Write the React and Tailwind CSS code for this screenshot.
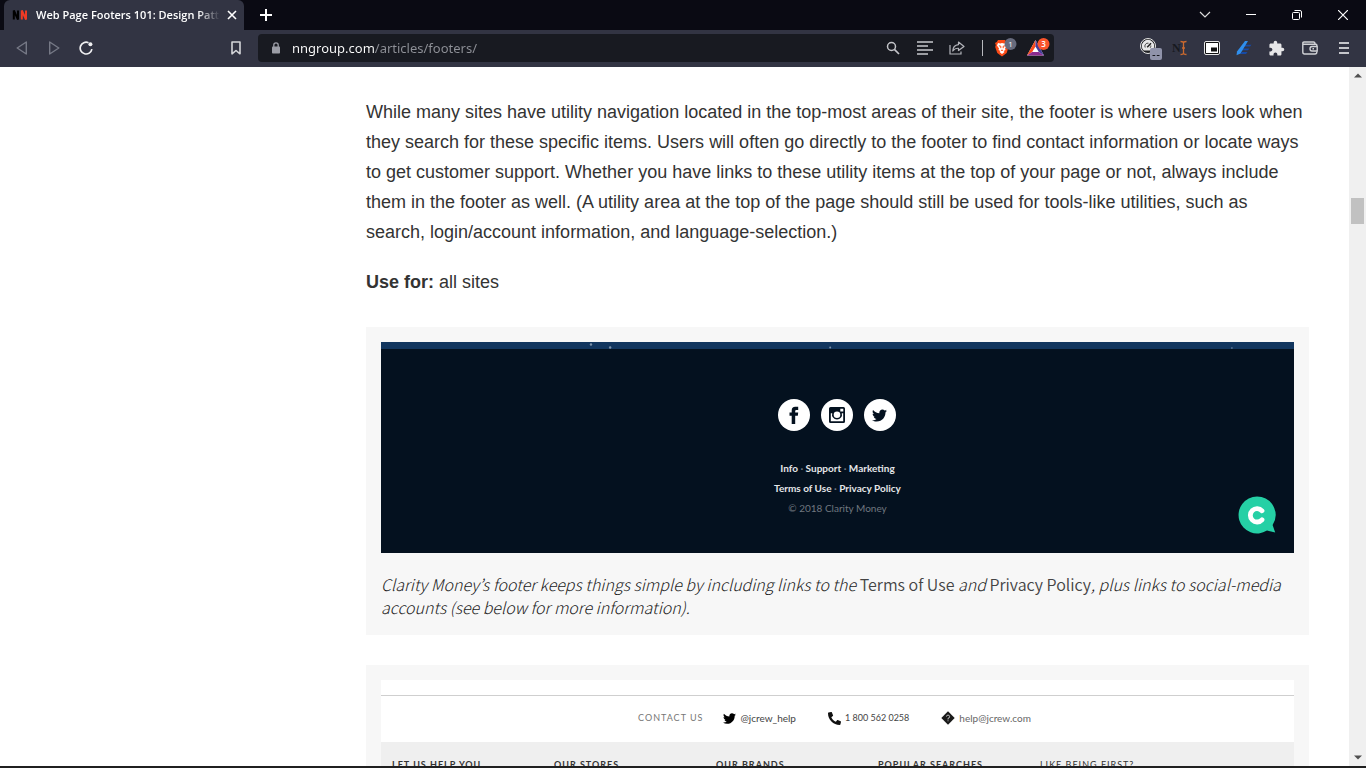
import React from "react";
import { FaTwitter, FaPhone } from "react-icons/fa";
import { MdExtension } from "react-icons/md";

function IconButton({ label, children, className = "" }) {
  return (
    <button type="button" aria-label={label} className={`flex h-7 w-8 shrink-0 items-center justify-center ${className}`}>
      {children}
    </button>
  );
}

function TabStrip() {
  return (
    <div className="flex h-[30px] shrink-0 items-stretch bg-[#0a0a13] pl-1 text-white">
      <div className="flex w-60 items-center rounded-t-md bg-[#323443] pl-2">
        <svg width="16" height="16" viewBox="0 0 16 16" className="shrink-0" aria-hidden="true">
          <path d="M1.8 12.5V3.5L6 12.5V3.5" fill="none" stroke="#000" strokeWidth="2" />
          <path d="M9.8 12.5V3.5L14 12.5V3.5" fill="none" stroke="#f03a24" strokeWidth="2" />
        </svg>
        <span className="ml-2 w-[184px] shrink-0 overflow-hidden font-['Open_Sans',sans-serif] text-[11px] font-semibold whitespace-nowrap [mask-image:linear-gradient(90deg,#000_162px,transparent_184px)]">
          Web Page Footers 101: Design Patterns
        </span>
        <button type="button" aria-label="Close tab" className="flex h-6 w-6 shrink-0 items-center justify-center">
          <svg width="10" height="10" viewBox="0 0 10 10" stroke="#fff" strokeWidth="1.6">
            <path d="M1 1L9 9M9 1L1 9" />
          </svg>
        </button>
      </div>
      <button type="button" aria-label="New tab" className="ml-1.5 flex w-8 items-center justify-center">
        <svg width="12" height="12" viewBox="0 0 12 12" stroke="#fff" strokeWidth="2">
          <path d="M6 0V12M0 6H12" />
        </svg>
      </button>
      <div className="ml-auto flex">
        <button type="button" aria-label="Search tabs" className="flex w-[46px] items-center justify-center">
          <svg width="12" height="12" viewBox="0 0 12 12" fill="none" stroke="#ddd" strokeWidth="1.2">
            <path d="M1 3L6 8L11 3" />
          </svg>
        </button>
        <button type="button" aria-label="Minimize" className="flex w-[46px] items-center justify-center">
          <svg width="10" height="10" viewBox="0 0 10 10" fill="#fff">
            <path d="M0 4H10V5H0Z" />
          </svg>
        </button>
        <button type="button" aria-label="Restore" className="flex w-[46px] items-center justify-center">
          <svg width="10" height="10" viewBox="0 0 10 10" fill="none" stroke="#fff">
            <rect x="0.5" y="2.5" width="7" height="7" rx="1" />
            <path d="M2.5 0.5H8Q9.5 0.5 9.5 2V7.5" />
          </svg>
        </button>
        <button type="button" aria-label="Close window" className="flex w-[46px] items-center justify-center">
          <svg width="10" height="10" viewBox="0 0 10 10" stroke="#fff" strokeWidth="1.2">
            <path d="M0 0L10 10M10 0L0 10" />
          </svg>
        </button>
      </div>
    </div>
  );
}

function AddressBar() {
  return (
    <form className="mr-[78px] ml-1.5 flex h-7 min-w-0 flex-1 items-center rounded bg-[#181a21]" onSubmit={(e) => e.preventDefault()}>
      <svg width="8" height="12" viewBox="0 0 8 12" className="mr-3 ml-3.5 shrink-0" aria-hidden="true">
        <path d="M1.8 5V3A2.2 2.2 0 0 1 6.2 3V5" fill="none" stroke="#9b9da6" strokeWidth="1.3" />
        <rect y="4.5" width="8" height="7" rx="0.8" fill="#9b9da6" />
      </svg>
      <input
        aria-label="Address"
        defaultValue="nngroup.com/articles/footers/"
        className="h-7 min-w-0 flex-1 bg-[linear-gradient(90deg,#ffffff_83px,#8f9198_83px)] bg-clip-text font-['Noto_Sans',sans-serif] text-[13px] text-transparent outline-none"
      />
      <IconButton label="Zoom">
        <svg width="14" height="14" viewBox="0 0 14 14" fill="none" stroke="#c3c4c9">
          <circle cx="5.5" cy="5.5" r="4" strokeWidth="1.5" />
          <path d="M8.4 8.4L13 13" strokeWidth="1.7" />
        </svg>
      </IconButton>
      <IconButton label="Reader view">
        <svg width="16" height="14" viewBox="0 0 16 14" fill="#9b9da2">
          <path d="M0 0H16V2H0ZM0 4H11V6H0ZM0 8H16V10H0ZM0 12H11V14H0Z" />
        </svg>
      </IconButton>
      <IconButton label="Share">
        <svg width="16" height="14" viewBox="0 0 16 14" fill="none" stroke="#b4b5bb" strokeWidth="1.2">
          <path d="M1 4V13H12V10.5" />
          <path d="M9.5 1L15 5.5L9.5 9.5V7.3Q6 7 3.8 10Q4 4.2 9.5 3.6Z" strokeLinejoin="round" />
        </svg>
      </IconButton>
      <span className="mr-1.5 ml-[9px] h-4 w-px bg-[#b8b9be]" />
      <IconButton label="Brave Shields">
        <svg width="24" height="20" viewBox="0 0 24 20">
          <path d="M5 2H12L14 4.5L15.5 5L15 7L15.5 9L13.7 15L9 18.5L4.3 15L2.2 9L2.8 7L2 5L3.8 4Z" fill="#fb4a16" />
          <path d="M5 5L7.3 5.5L9 5L11 5.5L13 5L14 7.5L12 10.5L12.5 12L10.5 13L11.5 14L9 16L6.6 14L7.5 13L5.5 12L6 10.5L4 7.5Z" fill="#fff" />
          <path d="M5.8 7.8L7.8 8.2V10.2M12.2 7.8L10.2 8.2V10.2M8 12L9 12.6L10 12" fill="none" stroke="#fb4a16" strokeWidth="1" />
          <circle cx="17.5" cy="6" r="6" fill="#676b7d" />
          <text x="17.5" y="9" textAnchor="middle" fill="#fff" fontSize="8" fontFamily="Open Sans">1</text>
        </svg>
      </IconButton>
      <IconButton label="Brave Rewards" className="ml-px">
        <svg width="24" height="20" viewBox="0 0 24 20">
          <path d="M9.5 2L1 17.5H18Z" fill="#fff" />
          <path d="M9.5 2L1 17.5L6.2 14L9.5 8.5Z" fill="#fa4b1b" />
          <path d="M1 17.5H18L12.8 14H6.2Z" fill="#8b2a8f" />
          <path d="M9.5 2L18 17.5L12.8 14L9.5 8.5Z" fill="#463b99" />
          <circle cx="17.5" cy="6" r="6" fill="#fb542b" />
          <text x="17.5" y="9" textAnchor="middle" fill="#fff" fontSize="8" fontWeight="600" fontFamily="Open Sans">3</text>
        </svg>
      </IconButton>
    </form>
  );
}

function Toolbar() {
  return (
    <div className="flex h-[37px] shrink-0 items-center bg-[#323443] px-1.5 pb-px">
      <IconButton label="Back">
        <svg width="12" height="14" viewBox="0 0 12 14" fill="none" stroke="#767986" strokeWidth="1.4" strokeLinejoin="round">
          <path d="M10.3 1V13L1.2 7Z" />
        </svg>
      </IconButton>
      <IconButton label="Forward">
        <svg width="12" height="14" viewBox="0 0 12 14" fill="none" stroke="#767986" strokeWidth="1.4" strokeLinejoin="round">
          <path d="M1.7 1V13L10.8 7Z" />
        </svg>
      </IconButton>
      <IconButton label="Reload">
        <svg width="14" height="14" viewBox="0 0 14 14" fill="none" stroke="#f0f0f2" strokeWidth="1.7">
          <path d="M9.5 1.7A5.9 5.9 0 1 0 12.9 8.2" />
          <circle cx="11.4" cy="3.2" r="2" fill="#f0f0f2" stroke="none" />
        </svg>
      </IconButton>
      <IconButton label="Bookmark this page" className="ml-[118px]">
        <svg width="10" height="14" viewBox="0 0 10 14" fill="none" stroke="#d4d5d9" strokeWidth="1.6">
          <path d="M1 1H9V12.8L5 9.5L1 12.8Z" strokeLinejoin="round" />
        </svg>
      </IconButton>
      <AddressBar />
      <IconButton label="Page speed">
        <svg width="24" height="24" viewBox="0 0 24 24" className="ml-1">
          <circle cx="10" cy="10" r="7.5" fill="#202124" stroke="#e6e6e6" strokeWidth="1" />
          <path d="M5.8 14.6A6.2 6.2 0 1 1 14.2 14.6Z" fill="#e8e8e8" />
          <path d="M7.2 11.5A3 3 0 0 1 10.5 7.2M12.8 9.5A3 3 0 0 1 12.2 11.8" fill="none" stroke="#333" strokeWidth="0.9" />
          <path d="M9.2 11.3L13 7.2" stroke="#222" strokeWidth="1.5" />
          <rect x="12" y="12" width="12" height="12" rx="2" fill="#9093aa" />
          <path d="M14.5 19.5H17.2M18.8 19.5H21.5" stroke="#16181f" strokeWidth="1.2" />
        </svg>
      </IconButton>
      <IconButton label="Text tool">
        <svg width="16" height="16" viewBox="0 0 16 16">
          <text x="0" y="12" fill="#17191f" fontSize="12" fontWeight="700" fontFamily="Liberation Serif">N</text>
          <path d="M8.5 1.5Q11.5 1.5 11.5 3V13Q11.5 14.5 8.5 14.5M14.5 1.5Q11.5 1.5 11.5 3M11.5 13Q11.5 14.5 14.5 14.5M10 8H13" fill="none" stroke="#cc6a2f" strokeWidth="1.3" />
        </svg>
      </IconButton>
      <IconButton label="Picture in picture">
        <svg width="16" height="14" viewBox="0 0 16 14">
          <rect x="0.5" y="0.5" width="15" height="13" rx="1.5" fill="#111" stroke="#e6e6e6" />
          <rect x="2" y="2" width="12" height="10" fill="#fff" />
          <rect x="7" y="6.5" width="6" height="4" fill="#111" />
        </svg>
      </IconButton>
      <IconButton label="Highlighter">
        <svg width="16" height="16" viewBox="0 0 16 16">
          <path d="M8.5 4.8H15.5L14 6.6H7ZM7.5 8.5H13.5L12 10.3H6ZM6 12H11.5L10 14H4Z" fill="#174aa5" />
          <path d="M9 1H12L4.5 13.5L0.5 15.2L1 11.5Z" fill="#2f8fee" />
        </svg>
      </IconButton>
      <IconButton label="Extensions">
        <MdExtension size={17} color="#e6e6e8" />
      </IconButton>
      <IconButton label="Wallet" className="ml-0.5">
        <svg width="16" height="14" viewBox="0 0 16 14" fill="none" stroke="#d0d1d5" strokeWidth="1.4">
          <path d="M14.8 5V4Q14.8 3.2 14 3.2H2Q0.8 3.2 0.8 2.2Q0.8 1 2 1H11.5Q13 1 13 3M0.8 2V11Q0.8 13 2.5 13H13Q14.8 13 14.8 11V10.5" />
          <path d="M15.2 5.5H10Q8 5.5 8 7.7Q8 10 10 10H15.2Z" />
          <path d="M10.5 7.8H12" />
        </svg>
      </IconButton>
      <IconButton label="Menu" className="ml-0.5">
        <svg width="10" height="12" viewBox="0 0 10 12" fill="#c5c6cb">
          <path d="M0 0H10V2H0ZM0 5H10V7H0ZM0 10H10V12H0Z" />
        </svg>
      </IconButton>
    </div>
  );
}

function SocialLink({ label, children }) {
  return (
    <a href="#social" aria-label={label} className="flex size-8 items-center justify-center rounded-full bg-white text-[#04111f]">
      {children}
    </a>
  );
}

function ClarityFooter() {
  return (
    <div className="relative h-[211px] bg-[#04111f] font-['Lato',sans-serif] text-[10px] font-bold text-[#e4e6e8]">
      <svg className="block h-[7px] w-full bg-[#12365f]" aria-hidden="true">
        <g fill="#7d93ab">
          <circle cx="23%" cy="2.5" r="1.2" />
          <circle cx="25.1%" cy="5.5" r="1.2" />
          <circle cx="49.2%" cy="5.5" r="1" />
          <circle cx="93.2%" cy="6" r="0.8" />
        </g>
      </svg>
      <div className="flex justify-center gap-[11px] pt-[50px] pr-0.5">
        <SocialLink label="Facebook">
          <svg width="10" height="18" viewBox="0 0 10 18" fill="currentColor">
            <path d="M2.7 18V9.8H0.5V6.6H2.7V4.4Q2.7 0.8 6.2 0.8H9.2V4H7.2Q6.2 4 6.2 5V6.6H9.2L8.8 9.8H6.2V18Z" />
          </svg>
        </SocialLink>
        <SocialLink label="Instagram">
          <svg width="16" height="16" viewBox="0 0 16 16" fill="currentColor">
            <path fillRule="evenodd" d="M1.5 0H14.5Q16 0 16 1.5V14.5Q16 16 14.5 16H1.5Q0 16 0 14.5V1.5Q0 0 1.5 0ZM11.3 1.7V4.6H14.3V1.7ZM1.8 6.2V14.2H14.2V6.2H12.8A5 5 0 1 1 3.2 6.2ZM8 4.4A3.3 3.3 0 1 0 8 11A3.3 3.3 0 1 0 8 4.4Z" />
          </svg>
        </SocialLink>
        <SocialLink label="Twitter">
          <FaTwitter size={15} />
        </SocialLink>
      </div>
      <div className="flex flex-col items-center pt-[27px] text-center leading-5">
        <p><a href="#info">Info</a> <span className="text-[#6d7680]">·</span> <a href="#support">Support</a> <span className="text-[#6d7680]">·</span> <a href="#marketing">Marketing</a></p>
        <p><a href="#terms">Terms of Use</a> <span className="text-[#6d7680]">·</span> <a href="#privacy">Privacy Policy</a></p>
        <p className="font-normal text-[#70777f]">© 2018 Clarity Money</p>
      </div>
      <button type="button" aria-label="Open chat" className="absolute right-[18px] bottom-[19px]">
        <svg width="38" height="38" viewBox="0 0 38 38" className="block">
          <path d="M19 0.5A18.5 18.5 0 1 0 29 34.6L37.2 36.5L34.6 29A18.5 18.5 0 0 0 19 0.5Z" fill="#25d0a5" />
          <path d="M24 14.8A6.7 6.7 0 1 0 24 23.8" fill="none" stroke="#fff" strokeWidth="4.8" strokeLinecap="round" />
        </svg>
      </button>
    </div>
  );
}

const columns = ["LET US HELP YOU", "OUR STORES", "OUR BRANDS", "POPULAR SEARCHES", "LIKE BEING FIRST?"];

function JCrewFooter() {
  return (
    <div className="bg-white font-['Lato',sans-serif] text-[10px] text-[#444]">
      <div className="h-4 border-b border-[#cfcfcf]" />
      <div className="flex h-[46px] items-center justify-center gap-8 pr-1.5 pb-0.5">
        <div className="flex items-center gap-5">
          <span className="text-[9px] tracking-[1px] text-[#777]">CONTACT US</span>
          <a href="#twitter" className="flex items-center gap-1">
            <FaTwitter size={13} color="#000" />@jcrew_help
          </a>
        </div>
        <a href="#call" className="flex items-center gap-1 text-[9px]">
          <FaPhone size={13} color="#111" className="-scale-x-100" />1 800 562 0258
        </a>
        <a href="#email" className="flex items-center gap-1 text-[#666]">
          <svg width="14" height="14" viewBox="0 0 14 14" aria-hidden="true">
            <path d="M7 0.3L13.7 7L7 13.7L0.3 7Z" fill="#1a1a1a" />
            <path d="M5.4 5.6A1.6 1.6 0 1 1 7 7.3V8.5M7 9.3V10.3" fill="none" stroke="#ccc" strokeWidth="0.9" />
          </svg>
          help@jcrew.com
        </a>
      </div>
      <div className="grid h-40 grid-cols-[repeat(4,162px)_1fr] bg-[#efefef] pt-[17px] pl-[11px] text-[9px] leading-3 font-bold tracking-[1px] text-[#333]">
        {columns.map((c) => (
          <h3 key={c} className="last:font-normal">{c}</h3>
        ))}
      </div>
    </div>
  );
}

function Scrollbar() {
  return (
    <div className="flex w-[17px] shrink-0 flex-col items-center bg-[#f0f0f0] py-1.5" aria-hidden="true">
      <svg width="8" height="5" viewBox="0 0 8 5" fill="#505050"><path d="M4 0.5L8 4.5H0Z" /></svg>
      <div className="mt-[120px] h-[26px] w-[13px] bg-[#c1c1c1]" />
      <svg width="8" height="5" viewBox="0 0 8 5" fill="#505050" className="mt-auto"><path d="M4 4.5L0 0.5H8Z" /></svg>
    </div>
  );
}

export default function App() {
  return (
    <div className="flex h-screen flex-col overflow-hidden border-b-2 border-[#202020] bg-white">
      <TabStrip />
      <Toolbar />
      <div className="flex min-h-0 flex-1">
        <main className="min-w-0 flex-1 overflow-hidden pt-[30px] pr-10 pl-[366px]">
          <article className="font-['Liberation_Sans',Arial,sans-serif] text-[18px] leading-[30px] text-[#333]">
            <p>
              While many sites have utility navigation located in the top-most areas of their site, the footer is where users look when they search for these specific items. Users will often go directly to the footer to find contact information or locate ways to get customer support. Whether you have links to these utility items at the top of your page or not, always include them in the footer as well. (A utility area at the top of the page should still be used for tools-like utilities, such as search, login/account information, and language-selection.)
            </p>
            <p className="mt-5"><strong>Use for:</strong> all sites</p>
          </article>
          <figure className="mt-[30px] bg-[#f7f7f7] p-[15px]">
            <ClarityFooter />
            <figcaption className="pt-5 pb-px font-['Noto_Sans_CJK_JP',sans-serif] text-[16px] leading-[23px] font-light text-[#1c1c1c] italic">
              Clarity Money’s footer keeps things simple by including links to the <span className="font-[350] text-[#444] not-italic">Terms of Use</span> and <span className="font-[350] text-[#444] not-italic">Privacy Policy</span>, plus links to social-media accounts (see below for more information).
            </figcaption>
          </figure>
          <figure className="mt-[30px] bg-[#f7f7f7] p-[15px]">
            <JCrewFooter />
          </figure>
        </main>
        <Scrollbar />
      </div>
    </div>
  );
}
